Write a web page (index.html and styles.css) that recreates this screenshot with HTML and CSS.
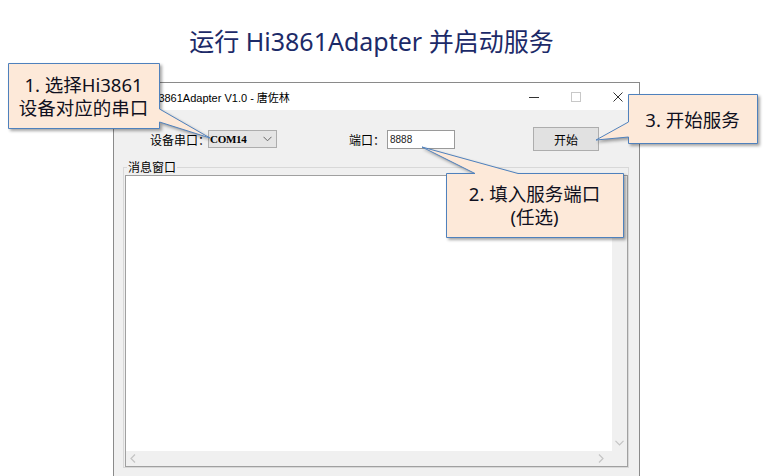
FILE: index.html
```html
<!DOCTYPE html>
<html lang="zh-CN">
<head>
<meta charset="utf-8">
<title>运行 Hi3861Adapter 并启动服务</title>
<link rel="stylesheet" href="styles.css">
</head>
<body>
<h1 class="title">运行 Hi3861Adapter 并启动服务</h1>

<div class="window">
  <div class="titlebar">
    <span class="app-title">Hi3861Adapter V1.0 - 唐佐林</span>
    <div class="winbtns">
      <span class="wbtn"><svg width="10" height="10" viewBox="0 0 10 10"><path d="M0 5.5h10" stroke="#333" stroke-width="1"/></svg></span>
      <span class="wbtn"><svg width="10" height="10" viewBox="0 0 10 10"><rect x="0.5" y="0.5" width="9" height="9" fill="none" stroke="#c8c8c8" stroke-width="1"/></svg></span>
      <span class="wbtn"><svg width="10" height="10" viewBox="0 0 10 10"><path d="M0.5 0.5L9.5 9.5M9.5 0.5L0.5 9.5" stroke="#333" stroke-width="1"/></svg></span>
    </div>
  </div>
  <div class="client">
    <div class="toolbar">
      <span class="lbl lbl-dev">设备串口：</span>
      <div class="combo"><span class="combo-text">COM14</span><svg class="chev" width="9" height="6" viewBox="0 0 9 6"><path d="M0.5 0.8L4.5 4.8L8.5 0.8" fill="none" stroke="#666" stroke-width="1"/></svg></div>
      <span class="lbl lbl-port">端口：</span>
      <div class="input">8888</div>
      <div class="btn">开始</div>
    </div>
    <fieldset class="group">
      <legend class="group-title">消息窗口</legend>
      <div class="textbox">
        <div class="text-area"></div>
        <div class="vscroll">
          <svg width="9" height="6" viewBox="0 0 9 6"><path d="M0.5 0.8L4.5 4.8L8.5 0.8" fill="none" stroke="#c4c4c4" stroke-width="1.2"/></svg>
        </div>
        <div class="hscroll">
          <svg width="6" height="9" viewBox="0 0 6 9"><path d="M5 0.5L1 4.5L5 8.5" fill="none" stroke="#c4c4c4" stroke-width="1.2"/></svg>
          <svg width="6" height="9" viewBox="0 0 6 9"><path d="M1 0.5L5 4.5L1 8.5" fill="none" stroke="#c4c4c4" stroke-width="1.2"/></svg>
        </div>
        <div class="corner"></div>
      </div>
    </fieldset>
  </div>
</div>

<svg class="callouts" width="763" height="476" viewBox="0 0 763 476">
  <polygon class="co" points="8.5,63.5 159.5,63.5 159.5,109 210,138 159.5,122 159.5,128.5 8.5,128.5"/>
  <polygon class="co" points="446.5,173.5 475,173.5 422,147 518,173.5 623.5,173.5 623.5,237.5 446.5,237.5"/>
  <polygon class="co" points="628.5,94.5 757.5,94.5 757.5,143.5 628.5,143.5 628.5,137 596,140 628.5,122"/>
</svg>
<div class="callout-text ct1">1. 选择Hi3861<br>设备对应的串口</div>
<div class="callout-text ct2">2. 填入服务端口<br>(任选)</div>
<div class="callout-text ct3">3. 开始服务</div>
</body>
</html>
```
FILE: styles.css
```css
html, body {
  margin: 0;
  padding: 0;
}
body {
  width: 763px;
  height: 476px;
  overflow: hidden;
  position: relative;
  background: #ffffff;
  font-family: "Noto Sans", "Noto Sans CJK SC", sans-serif;
}
.title {
  margin: 0;
  height: 82px;
  box-sizing: border-box;
  padding: 25px 20px 0 0;
  line-height: 32px;
  font-size: 25px;
  font-weight: normal;
  text-align: center;
  color: #1c2a68;
}
.window {
  margin-left: 113px;
  width: 527px;
  height: 400px;
  box-sizing: border-box;
  border: 1px solid #8a8a8a;
  border-bottom: none;
  background: #f0f0f0;
}
.titlebar {
  height: 27px;
  background: #ffffff;
  display: flex;
  align-items: center;
}
.app-title {
  margin-left: 34px;
  font-size: 11px;
  color: #000;
  font-family: "Liberation Sans", "Noto Sans CJK SC", sans-serif;
}
.winbtns {
  margin-left: auto;
  display: flex;
  height: 100%;
}
.wbtn {
  width: 42px;
  display: flex;
  align-items: center;
  justify-content: center;
}
.client {
  padding: 17px 10px 0 9px;
}
.toolbar {
  display: flex;
  align-items: center;
  height: 24px;
  font-family: "Noto Sans CJK SC", sans-serif;
  font-size: 12px;
  color: #000;
}
.lbl {
  white-space: nowrap;
}
.lbl-dev {
  margin-left: 27px;
  width: 58px;
}
.combo {
  width: 69px;
  height: 18px;
  box-sizing: border-box;
  border: 1px solid #adadad;
  background: #e5e5e5;
  display: flex;
  align-items: center;
  padding-left: 1px;
}
.combo-text {
  font-family: "Liberation Serif", serif;
  font-weight: bold;
  font-size: 11px;
  letter-spacing: -0.3px;
}
.chev {
  margin-left: auto;
  margin-right: 4px;
}
.lbl-port {
  margin-left: 72px;
  width: 38px;
}
.input {
  width: 68px;
  height: 19px;
  box-sizing: border-box;
  border: 1px solid #9a9a9a;
  background: #fff;
  font-family: "Liberation Sans", sans-serif;
  font-size: 10px;
  line-height: 17px;
  padding-left: 2px;
  color: #222;
}
.btn {
  margin-left: 78px;
  width: 66px;
  height: 24px;
  box-sizing: border-box;
  border: 1px solid #adadad;
  background: #e1e1e1;
  display: flex;
  align-items: center;
  justify-content: center;
}
.group {
  margin: 9px 0 0 0;
  padding: 1px 0 0 1px;
  border: 1px solid #d8d8d8;
  min-width: 0;
}
.group-title {
  margin-left: 2px;
  padding: 0 1px;
  font-family: "Noto Sans CJK SC", sans-serif;
  font-size: 12px;
  line-height: 14px;
  color: #000;
}
.textbox {
  height: 292px;
  box-sizing: border-box;
  border: 1px solid #a0a0a0;
  display: grid;
  grid-template-columns: 1fr 15px;
  grid-template-rows: 1fr 15px;
  background: #fff;
}
.text-area {
  background: #fff;
}
.vscroll {
  background: #f0f0f0;
  display: flex;
  flex-direction: column;
  justify-content: flex-end;
  align-items: center;
  padding-bottom: 5px;
}
.hscroll {
  background: #f0f0f0;
  display: flex;
  align-items: center;
  justify-content: space-between;
  padding: 0 8px 0 4px;
}
.corner {
  background: #f0f0f0;
}
.callouts {
  position: absolute;
  left: 0;
  top: 0;
}
.co {
  fill: #fde9d9;
  stroke: #4f81bd;
  stroke-width: 1;
  filter: drop-shadow(2px 2px 1.5px rgba(0, 0, 0, 0.35));
}
.callout-text {
  position: absolute;
  text-align: center;
  font-family: "Noto Sans", "Noto Sans CJK SC", sans-serif;
  font-size: 18.5px;
  line-height: 23px;
  color: #101020;
}
.ct1 {
  left: 8px;
  top: 73px;
  width: 151px;
}
.ct2 {
  left: 446px;
  top: 182px;
  width: 177px;
}
.ct3 {
  left: 628px;
  top: 108px;
  width: 129px;
}
```
